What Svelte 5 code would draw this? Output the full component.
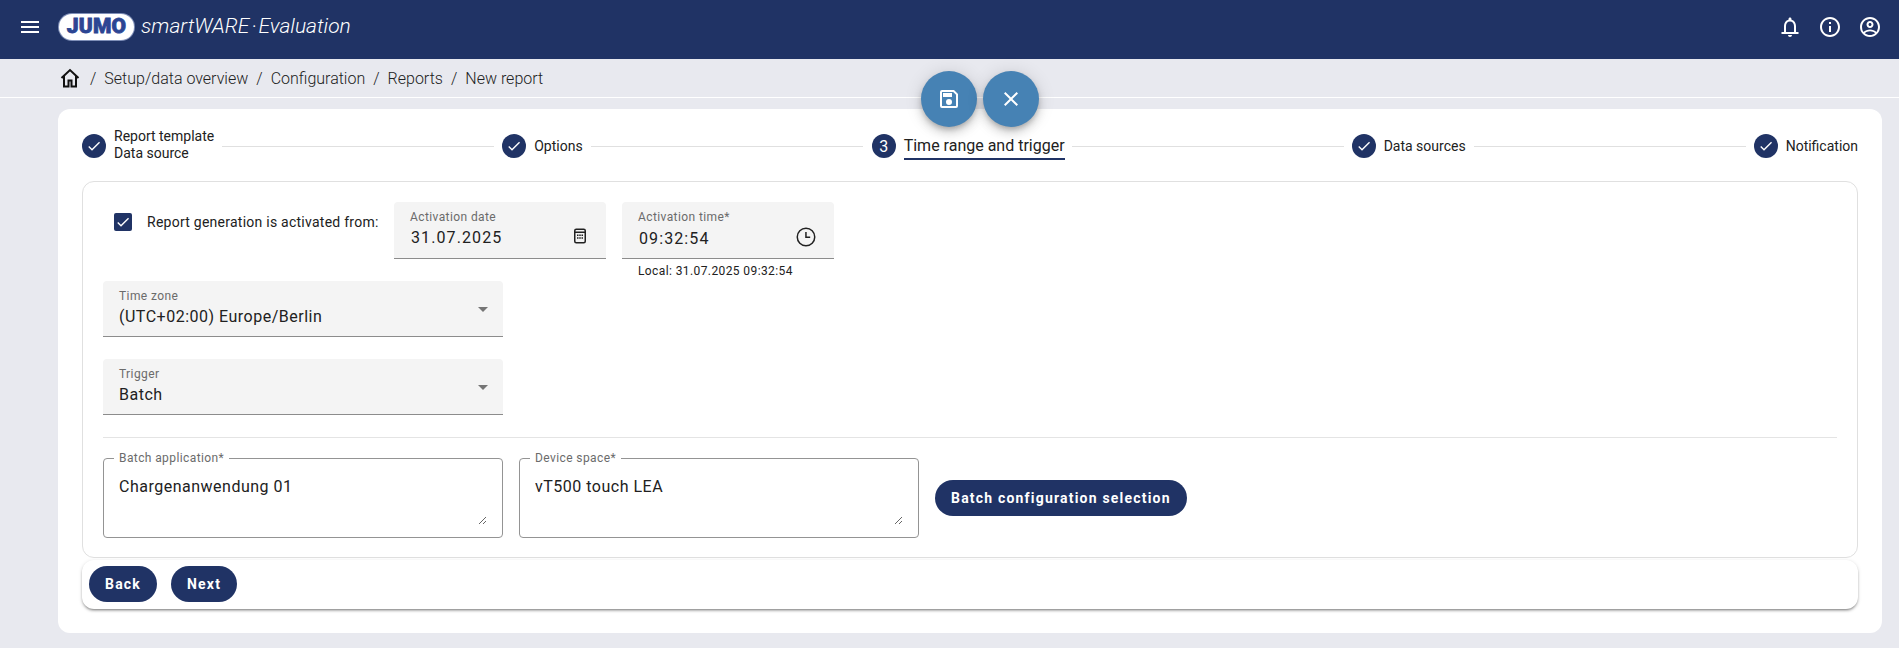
<script lang="ts">
  const crumbs = ['Setup/data overview', 'Configuration', 'Reports', 'New report'];
</script>

<div class="page">
  <header class="topbar">
    <button class="icon-btn menu" type="button" aria-label="Menu">
      <svg viewBox="0 0 24 24" width="24" height="24"><path d="M3 18h18v-2H3v2zm0-5h18v-2H3v2zm0-7v2h18V6H3z" /></svg>
    </button>
    <div class="logo"><span>JUMO</span></div>
    <div class="product">smartWARE · Evaluation</div>
    <div class="top-actions">
      <svg viewBox="0 0 24 24" width="24" height="24"><path d="M12 22c1.1 0 2-.9 2-2h-4c0 1.1.9 2 2 2zm6-6v-5c0-3.07-1.63-5.64-4.500-6.320V4c0-.83-.67-1.500-1.500-1.500s-1.500.67-1.500 1.500v.68C7.640 5.360 6 7.920 6 11v6H3.500v2h17v-2H18v-1zm-2 1H8v-6c0-2.480 1.510-4.500 4-4.500s4 2.020 4 4.500v6z" /></svg>
      <svg viewBox="0 0 24 24" width="24" height="24"><path d="M11 7h2v2h-2zm0 4h2v6h-2zm1-9C6.480 2 2 6.480 2 12s4.480 10 10 10 10-4.480 10-10S17.520 2 12 2zm0 18c-4.410 0-8-3.590-8-8s3.590-8 8-8 8 3.590 8 8-3.590 8-8 8z" /></svg>
      <svg viewBox="0 0 24 24" width="24" height="24"><path d="M12 2C6.480 2 2 6.480 2 12s4.480 10 10 10 10-4.480 10-10S17.520 2 12 2zm0 18c-1.900 0-3.700-.66-5.100-1.800 1.300-1.200 3.100-1.900 5.100-1.900s3.800.7 5.100 1.900C15.700 19.340 13.900 20 12 20zm6.500-3.100C16.900 15.400 14.600 14.500 12 14.500s-4.900.9-6.500 2.400A7.960 7.960 0 0 1 4 12c0-4.410 3.590-8 8-8s8 3.590 8 8c0 1.830-.62 3.520-1.500 4.900zM12 6c-1.930 0-3.500 1.570-3.500 3.500S10.070 13 12 13s3.500-1.570 3.500-3.500S13.930 6 12 6zm0 5c-.83 0-1.500-.67-1.500-1.500S11.170 8 12 8s1.500.67 1.500 1.500S12.830 11 12 11z" /></svg>
    </div>
  </header>

  <nav class="crumbs">
    <svg class="home" viewBox="0 0 24 24" width="24" height="24"><path d="M3.500 12 12 4l8.500 8M6 10v10.500h4.500v-6h3v6H18V10" /></svg>
    {#each crumbs as crumb}
      <span class="sep">/</span><span class="crumb">{crumb}</span>
    {/each}
  </nav>

  <div class="fabs">
    <button class="fab" type="button" aria-label="Save">
      <svg viewBox="0 0 24 24" width="24" height="24"><path d="M17 3H5a2 2 0 0 0-2 2v14a2 2 0 0 0 2 2h14a2 2 0 0 0 2-2V7l-4-4zm2 16H5V5h11.170L19 7.830V19zm-7-7a3 3 0 1 0 0 6 3 3 0 0 0 0-6zM6 6h9v4H6V6z" /></svg>
    </button>
    <button class="fab" type="button" aria-label="Close">
      <svg viewBox="0 0 24 24" width="24" height="24"><path d="M19 6.410 17.590 5 12 10.590 6.410 5 5 6.410 10.590 12 5 17.590 6.410 19 12 13.410 17.590 19 19 17.590 13.410 12z" /></svg>
    </button>
  </div>

  <main class="card">
    <div class="stepper">
      <div class="step">
        <span class="dot"><svg viewBox="0 0 24 24" width="16" height="16"><path d="M9 16.200 4.800 12l-1.400 1.400L9 19 21 7l-1.400-1.400z" /></svg></span>
        <span class="label two">Report template<br />Data source</span>
      </div>
      <i class="line"></i>
      <div class="step">
        <span class="dot"><svg viewBox="0 0 24 24" width="16" height="16"><path d="M9 16.200 4.800 12l-1.400 1.400L9 19 21 7l-1.400-1.400z" /></svg></span>
        <span class="label">Options</span>
      </div>
      <i class="line"></i>
      <div class="step current">
        <span class="dot num">3</span>
        <span class="label active">Time range and trigger</span>
      </div>
      <i class="line"></i>
      <div class="step">
        <span class="dot"><svg viewBox="0 0 24 24" width="16" height="16"><path d="M9 16.200 4.800 12l-1.400 1.400L9 19 21 7l-1.400-1.400z" /></svg></span>
        <span class="label">Data sources</span>
      </div>
      <i class="line"></i>
      <div class="step">
        <span class="dot"><svg viewBox="0 0 24 24" width="16" height="16"><path d="M9 16.200 4.800 12l-1.400 1.400L9 19 21 7l-1.400-1.400z" /></svg></span>
        <span class="label">Notification</span>
      </div>
    </div>

    <section class="panel">
      <div class="row activation">
        <label class="check">
          <span class="box"><svg viewBox="0 0 24 24" width="16" height="16"><path d="M9 16.200 4.800 12l-1.400 1.400L9 19 21 7l-1.400-1.400z" /></svg></span>
          Report generation is activated from:
        </label>
        <div class="field small">
          <span class="cap">Activation date</span>
          <span class="val spaced">31.07.2025</span>
          <svg class="suffix" viewBox="0 0 24 24" width="18" height="18"><path d="M7 2h10a3 3 0 0 1 3 3v14a3 3 0 0 1-3 3H7a3 3 0 0 1-3-3V5a3 3 0 0 1 3-3zm-1 6v11a1 1 0 0 0 1 1h10a1 1 0 0 0 1-1V8H6zm0-2h12V5a1 1 0 0 0-1-1H7a1 1 0 0 0-1 1v1zm2 4h2v2H8v-2zm3 0h2v2h-2v-2zm3 0h2v2h-2v-2zm-6 3.500h2v2H8v-2zm3 0h2v2h-2v-2zm3 0h2v2h-2v-2z" /></svg>
        </div>
        <div class="time">
          <div class="field small">
            <span class="cap">Activation time*</span>
            <span class="val spaced low">09:32:54</span>
            <svg class="suffix clock" viewBox="0 0 24 24" width="24" height="24"><path d="M12 2.500a9.500 9.500 0 1 0 0 19 9.500 9.500 0 0 0 0-19zm0 1.500a8 8 0 1 1 0 16 8 8 0 0 1 0-16zm-.800 3v6h5v-1.500h-3.500V7h-1.500z" /></svg>
          </div>
          <div class="hint">Local: 31.07.2025 09:32:54</div>
        </div>
      </div>

      <div class="field select">
        <span class="cap">Time zone</span>
        <span class="val">(UTC+02:00) Europe/Berlin</span>
        <i class="caret"></i>
      </div>

      <div class="field select">
        <span class="cap">Trigger</span>
        <span class="val">Batch</span>
        <i class="caret"></i>
      </div>

      <hr />

      <div class="row batch">
        <fieldset class="outlined">
          <legend>Batch application*</legend>
          <textarea readonly>Chargenanwendung 01</textarea>
        </fieldset>
        <fieldset class="outlined">
          <legend>Device space*</legend>
          <textarea readonly>vT500 touch LEA</textarea>
        </fieldset>
        <button class="pill" type="button">Batch configuration selection</button>
      </div>
    </section>

    <div class="actions">
      <button class="pill" type="button">Back</button>
      <button class="pill" type="button">Next</button>
    </div>
  </main>
</div>

<style>
  :global(body) {
    margin: 0;
    background: #e8e9ef;
    font-family: Roboto, "Liberation Sans", sans-serif;
    color: #212121;
  }

  .page {
    position: relative;
    height: 648px;
    overflow: hidden;
  }

  .topbar {
    height: 59px;
    display: flex;
    align-items: center;
    padding: 0 18px;
    background: #203365;
    color: #fff;
  }

  .icon-btn {
    display: flex;
    padding: 0;
    border: 0;
    background: none;
  }

  .topbar svg {
    fill: #fff;
    display: block;
  }

  .menu {
    margin-right: 17px;
    margin-top: -5px;
  }

  .logo {
    width: 73px;
    height: 24px;
    margin-top: -6px;
    margin-left: 1px;
    display: flex;
    align-items: center;
    justify-content: center;
    border-radius: 12px;
    background: #fff;
    box-shadow: 0 0 0 1px #fff, 0 0 0 2px #7f8fb8;
  }

  .logo span {
    font: 900 21px/1 Roboto, sans-serif;
    letter-spacing: 0.2px;
    color: #2c4593;
    -webkit-text-stroke: 0.8px #2c4593;
  }

  .product {
    margin-left: 8px;
    margin-top: -6px;
    font: italic 300 21px/1 Roboto, sans-serif;
    word-spacing: -3px;
    white-space: nowrap;
  }

  .top-actions {
    margin-left: auto;
    margin-top: -5px;
    display: flex;
    gap: 16px;
    margin-right: -1px;
  }

  .crumbs {
    height: 39px;
    box-sizing: border-box;
    display: flex;
    align-items: center;
    padding: 0 0 0 58px;
    border-bottom: 1px solid #fff;
    font-size: 16px;
    font-weight: 300;
    color: #212121;
  }

  .home {
    fill: none;
    stroke: #111;
    stroke-width: 2;
    margin-right: 7px;
  }

  .sep {
    margin: 0 8px 0 1px;
  }

  .crumb {
    margin-right: 7px;
  }

  .fabs {
    position: absolute;
    top: 71px;
    left: 921px;
    display: flex;
    gap: 6px;
    z-index: 2;
  }

  .fab {
    width: 56px;
    height: 56px;
    display: flex;
    align-items: center;
    justify-content: center;
    padding: 0;
    border: 0;
    border-radius: 50%;
    background: #4682b4;
    box-shadow: 0 3px 5px -1px rgba(0, 0, 0, 0.2), 0 6px 10px 0 rgba(0, 0, 0, 0.14), 0 1px 18px 0 rgba(0, 0, 0, 0.12);
  }

  .fab svg {
    fill: #fff;
  }

  .card {
    margin: 11px 17px 0 58px;
    height: 524px;
    box-sizing: border-box;
    padding: 25px 24px 0;
    border-radius: 12px;
    background: #fff;
  }

  .stepper {
    height: 24px;
    display: flex;
    align-items: center;
    gap: 8px;
    margin-bottom: 23px;
  }

  .step {
    display: flex;
    align-items: center;
    gap: 8px;
    flex: none;
  }

  .step.current {
    margin: 0 -1px 0 1px;
  }

  .dot {
    width: 24px;
    height: 24px;
    display: flex;
    align-items: center;
    justify-content: center;
    border-radius: 50%;
    background: #203365;
    color: #fff;
    font-size: 16px;
  }

  .dot svg {
    fill: #fff;
  }

  .label {
    font-size: 14px;
    line-height: 20px;
    white-space: nowrap;
  }

  .label.two {
    margin-top: -2px;
    line-height: 17px;
  }

  .label.active {
    position: relative;
    font-size: 16px;
  }

  .label.active::after {
    content: "";
    position: absolute;
    left: 0;
    right: 0;
    bottom: -4px;
    height: 2px;
    background: #203365;
  }

  .line {
    flex: 1;
    height: 1px;
    background: #e0e0e0;
  }

  .panel {
    height: 377px;
    box-sizing: border-box;
    padding: 20px 20px 0;
    border: 1px solid #e0e0e0;
    border-radius: 12px;
  }

  .row {
    display: flex;
  }

  .activation {
    height: 79px;
  }

  .check {
    width: 291px;
    height: 40px;
    display: flex;
    align-items: center;
    gap: 15px;
    padding-left: 11px;
    box-sizing: border-box;
    font-size: 14px;
    letter-spacing: 0.25px;
    white-space: nowrap;
  }

  .box {
    width: 18px;
    height: 18px;
    display: flex;
    flex: none;
    align-items: center;
    justify-content: center;
    border-radius: 2px;
    background: #203365;
  }

  .box svg {
    fill: #fff;
  }

  .field {
    position: relative;
    width: 400px;
    height: 56px;
    box-sizing: border-box;
    padding: 7px 16px 0;
    border-bottom: 1px solid #8c8c8c;
    border-radius: 4px 4px 0 0;
    background: #f4f4f4;
    margin-bottom: 22px;
    display: flex;
    flex-direction: column;
  }

  .field.small {
    width: 212px;
    height: 57px;
    margin: 0;
  }

  .cap {
    font-size: 12px;
    line-height: 16px;
    letter-spacing: 0.4px;
    color: #6b6b6b;
  }

  .val {
    margin-top: 1px;
    font-size: 16px;
    line-height: 24px;
    letter-spacing: 0.5px;
  }

  .val.spaced {
    margin: 1px 0 0 1px;
    letter-spacing: 1.1px;
  }

  .val.spaced.low {
    margin-top: 2px;
  }

  .suffix {
    position: absolute;
    right: 17px;
    top: 25px;
    fill: #212121;
  }

  .suffix.clock {
    top: 23px;
    right: 16px;
  }

  .time {
    margin-left: 16px;
  }

  .hint {
    padding: 5px 16px 0;
    font-size: 12px;
    line-height: 14px;
    letter-spacing: 0.4px;
  }

  .caret {
    position: absolute;
    right: 15px;
    top: 26px;
    width: 0;
    height: 0;
    border: 5px solid transparent;
    border-top-color: #757575;
    border-bottom: 0;
  }

  hr {
    height: 1px;
    margin: 0 0 12px;
    border: 0;
    background: #e4e4e4;
  }

  .batch {
    align-items: center;
    gap: 16px;
  }

  .outlined {
    width: 400px;
    height: 88px;
    box-sizing: border-box;
    margin: 0;
    padding: 0 15px;
    border: 1px solid #949494;
    border-radius: 4px;
    min-width: 0;
  }

  legend {
    padding: 0 5px;
    margin-left: -5px;
    font-size: 12px;
    line-height: 16px;
    letter-spacing: 0.4px;
    color: #6b6b6b;
  }

  textarea {
    display: block;
    width: 100%;
    height: 58px;
    box-sizing: border-box;
    margin-top: 1px;
    padding: 8px 0 0;
    border: 0;
    outline: 0;
    background: none;
    font: 16px/24px Roboto, sans-serif;
    letter-spacing: 0.5px;
    color: #212121;
  }

  .pill {
    height: 36px;
    padding: 0 16px;
    border: 0;
    border-radius: 18px;
    background: #203365;
    color: #fff;
    font: 700 14px/36px Roboto, sans-serif;
    letter-spacing: 1.2px;
    white-space: nowrap;
  }

  .batch .pill {
    margin-top: 8px;
  }

  .actions {
    height: 49px;
    box-sizing: border-box;
    display: flex;
    align-items: center;
    gap: 14px;
    margin-top: 2px;
    padding: 0 0 2px 7px;
    border-radius: 12px;
    background: #fff;
    box-shadow: 0 2px 3px -1px rgba(0, 0, 0, 0.5), 0 1px 4px rgba(0, 0, 0, 0.12);
  }
</style>
